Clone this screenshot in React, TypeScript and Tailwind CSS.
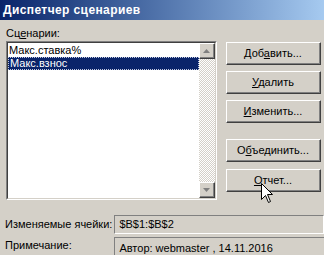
import type { ReactNode } from "react";

function Raised({ children, className = "" }: { children?: ReactNode; className?: string }) {
  return (
    <div className={`border-t border-l border-white border-r border-b border-r-[#404040] border-b-[#404040] ${className}`}>
      <div className="w-full h-full border-r border-b border-[#808080] flex items-center justify-center">
        {children}
      </div>
    </div>
  );
}

function Arrow({ up }: { up?: boolean }) {
  return (
    <svg width="7" height="4" viewBox="0 0 7 4">
      {up ? <path d="M0 4 L3.5 0 L7 4 Z" fill="#808080" /> : <path d="M0 0 L7 0 L3.5 4 Z" fill="#808080" />}
    </svg>
  );
}

function Button({ top, children }: { top: number; children: ReactNode }) {
  return (
    <div style={{ marginTop: top }}>
      <Raised className="w-[95px] h-[23px] text-black">
        <span>{children}</span>
      </Raised>
    </div>
  );
}

export default function App() {
  return (
    <div className="relative w-[324px] h-[255px] overflow-hidden bg-[#d4d0c8] font-['Liberation_Sans',Arial,sans-serif] text-[11px] leading-[13px] text-black">
      <div className="h-[20px] flex items-center px-[3px] bg-gradient-to-r from-[#0a246a] to-[#a6caf0]">
        <span className="text-white font-bold text-[12px] tracking-[0.4px]">Диспетчер сценариев</span>
      </div>

      <div className="flex">
        <div className="ml-[6px] w-[211px]">
          <div className="mt-[7px] h-[13px]">
            Сц<span className="underline">е</span>нарии:
          </div>
          <div className="mt-[1px] h-[159px] border-t border-l border-[#808080] border-r border-b border-r-white border-b-white">
            <div className="h-full flex border-t border-l border-[#404040] border-r border-b border-r-[#d4d0c8] border-b-[#d4d0c8] bg-white">
              <div className="flex-1 pt-px">
                <div className="h-[13px] pl-[1px]">Макс.ставка%</div>
                <div className="h-[13px] pl-[1px] bg-[#0a246a] text-white border border-dotted border-[#c0c8e0] leading-[11px]">
                  Макс.взнос
                </div>
              </div>
              <div className="w-[16px] flex flex-col bg-[repeating-conic-gradient(#d4d0c8_0_25%,#ffffff_0_50%)] bg-[length:2px_2px]">
                <Raised className="w-[16px] h-[16px] bg-[#d4d0c8]">
                  <Arrow up />
                </Raised>
                <div className="flex-1" />
                <Raised className="w-[16px] h-[16px] bg-[#d4d0c8]">
                  <Arrow />
                </Raised>
              </div>
            </div>
          </div>
        </div>

        <div className="ml-[9px] pt-[22px] flex flex-col">
          <Button top={0}>
            Доб<span className="underline">а</span>вить...
          </Button>
          <Button top={6}>
            <span className="underline">У</span>далить
          </Button>
          <Button top={6}>
            <span className="underline">И</span>зменить...
          </Button>
          <Button top={16}>
            О<span className="underline">б</span>ъединить...
          </Button>
          <Button top={7}>
            <span className="underline">О</span>тчет...
          </Button>
        </div>
      </div>

      <div className="flex items-center mt-[15px] h-[19px]">
        <div className="w-[120px] pl-[5px]">Изменяемые ячейки:</div>
        <div className="w-[220px] h-[19px] flex items-center pl-[4px] border-t border-l border-[#808080] border-r border-b border-r-white border-b-white">
          $B$1:$B$2
        </div>
      </div>
      <div className="flex mt-[3px]">
        <div className="w-[120px] pl-[5px] pt-[2px]">Примечание:</div>
        <div className="w-[220px] h-[30px] pl-[4px] pt-[4px] border-t border-l border-[#808080]">
          Автор: webmaster , 14.11.2016
        </div>
      </div>

      <svg className="absolute left-[261px] top-[183px]" width="13" height="21" viewBox="0 0 13 21">
        <path
          d="M0.5 0.5 L0.5 16.5 L4.5 12.5 L7.5 19.5 L9.5 18.5 L6.5 11.5 L11.5 11.5 Z"
          fill="#ffffff"
          stroke="#000000"
          strokeWidth="1"
        />
      </svg>
    </div>
  );
}
